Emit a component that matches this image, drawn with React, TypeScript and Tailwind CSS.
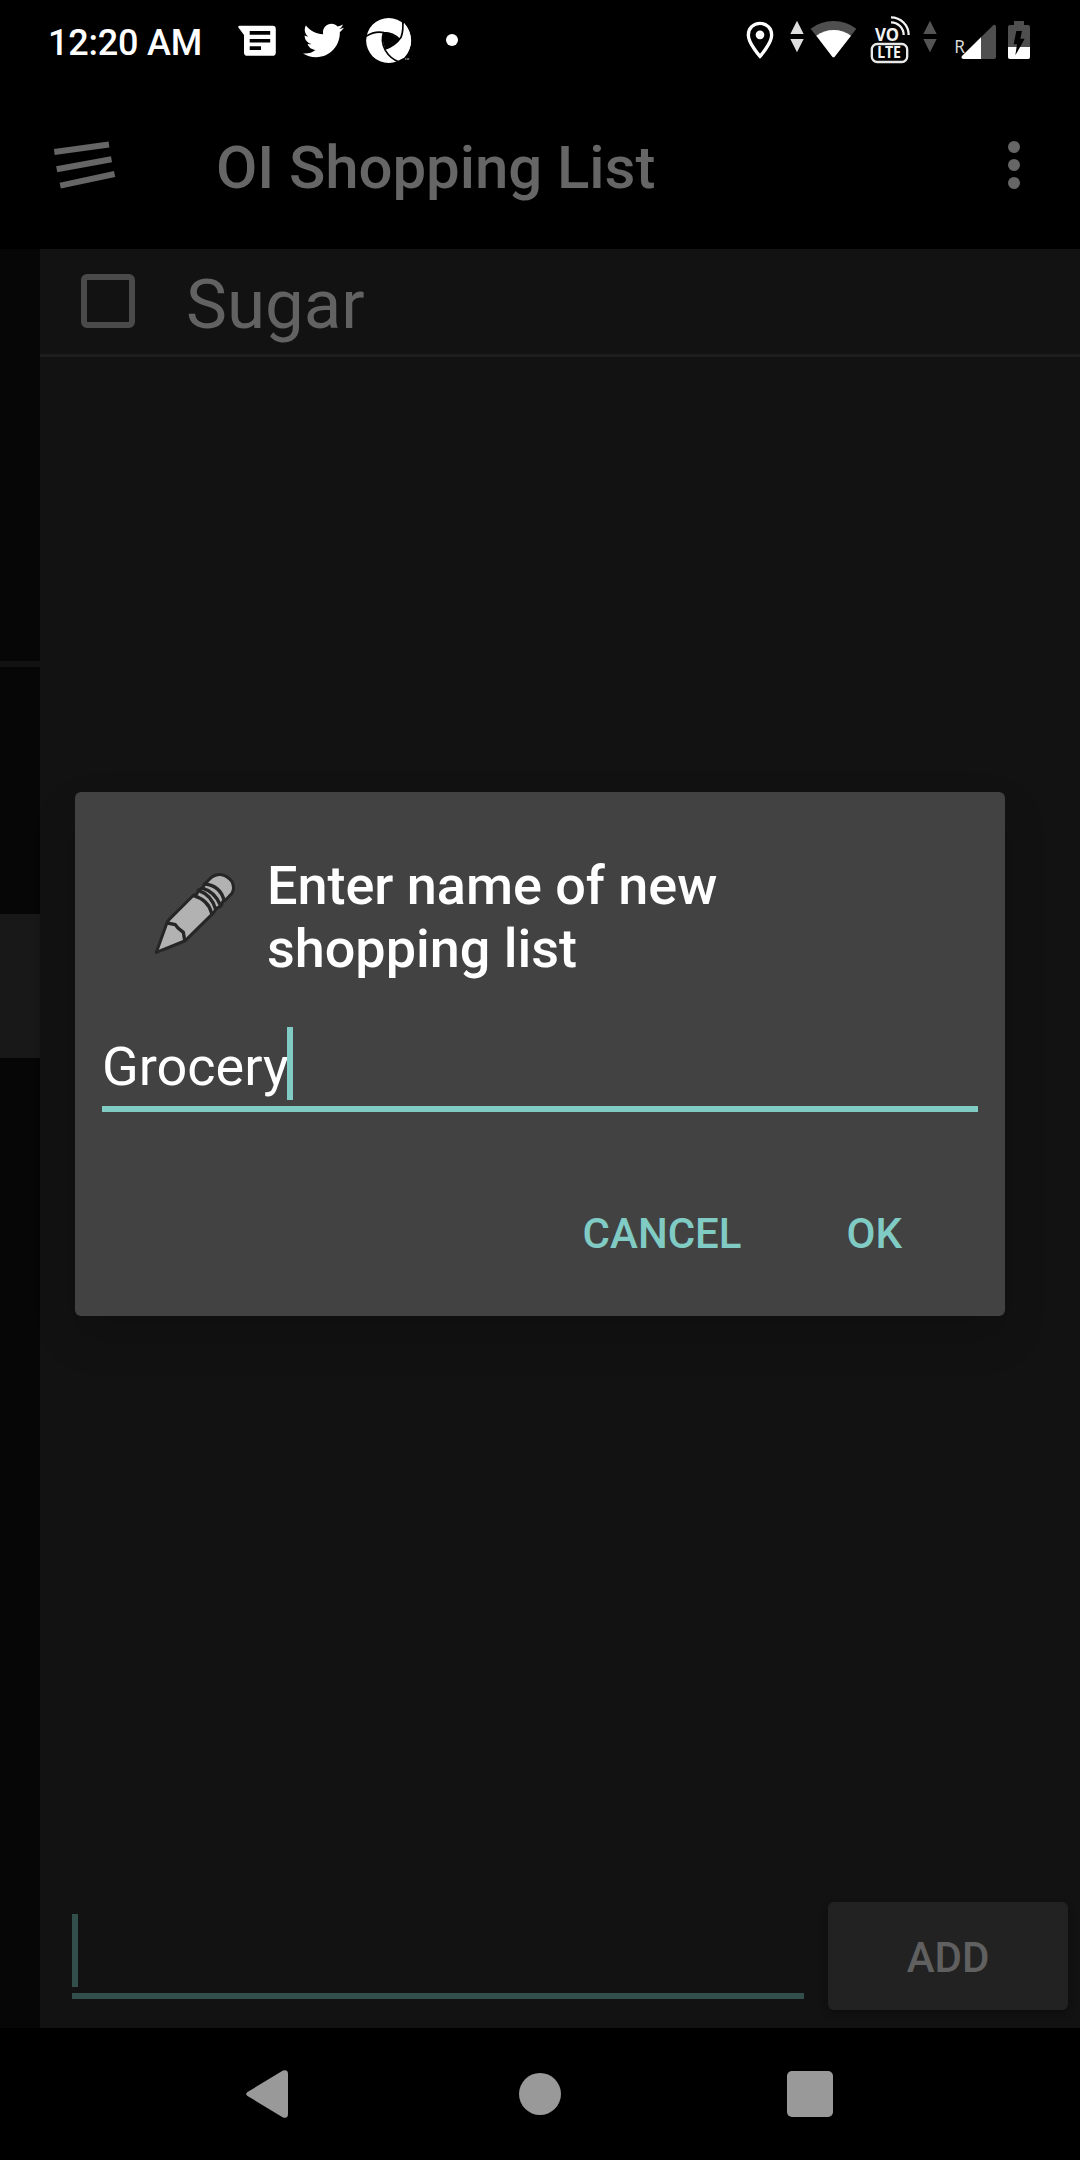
import React from "react";
import { FaTwitter } from "react-icons/fa";

function MessagesIcon() {
  return (
    <svg className="ml-[36px] h-[72px] w-[40px]" viewBox="237 0 40 72">
      <path
        fillRule="evenodd"
        fill="#fff"
        d="M239.5 25.8H272.6a3.2 3.2 0 0 1 3.2 3.2V52.4a3.4 3.4 0 0 1-3.4 3.4H247.4a3.4 3.4 0 0 1-3.4-3.4V35L238.4 27.4Q238 25.8 239.5 25.8ZM249.7 31V34.8H270.2V31ZM249.7 39V42.5H270.2V39ZM249.7 46.3V50H261V46.3Z"
      />
    </svg>
  );
}

function ApertureIcon() {
  return (
    <svg className="ml-[21px] h-[72px] w-[47px]" viewBox="1095 0 141 216">
      <circle cx="1166" cy="121.500" r="67.500" fill="#fff" />
      <path d="M1206 50L1236 90L1222 84Q1216 70 1207 64ZM1186 196L1188 187L1216 176L1236 160V196Z" fill="#000" />
      <path d="M1212 68Q1232 90 1233 121Q1233 152 1212 174L1196 178Q1178 168 1165 151L1158 148Q1186 140 1206 112Q1213 92 1212 68Z" fill="#fff" />
      <path d="M1151 98Q1175 97 1197 118Q1184 139 1157 147Q1144 124 1151 98Z" fill="#000" />
      <g fill="none" stroke="#000" strokeWidth="5">
        <path d="M1098 109Q1125 92 1152 98Q1180 98 1198 118" />
        <path d="M1208 60Q1211 92 1203 112Q1186 137 1156 147" />
        <path d="M1151 97Q1141 122 1156 151Q1171 176 1196 185" />
      </g>
      <path d="M1215 177h5M1223 175v4M1226 175v4" stroke="#ddd" strokeWidth="2.500" />
    </svg>
  );
}

function UpDown({ dim, className }: { dim?: boolean; className: string }) {
  return (
    <svg className={className} viewBox="209 0 42 216">
      <path d="M230 62L250 102H210ZM210 117H250L230 157Z" fill={dim ? "#545454" : "#dedede"} />
    </svg>
  );
}

function StatusBar() {
  return (
    <header className="flex h-[72px] w-full items-start text-white">
      <span className="mt-[22px] ml-[48px] w-[153px] text-[36px] leading-[42px] font-medium tracking-[-0.2px] whitespace-nowrap">
        12:20 AM
      </span>
      <MessagesIcon />
      <FaTwitter className="mt-[20px] ml-[26px] size-[41px]" />
      <ApertureIcon />
      <span className="mt-[34px] ml-[34px] size-[12px] rounded-full bg-white" />

      <svg className="ml-[288px] h-[72px] w-[28px]" viewBox="79 0 84 216">
        <path
          d="M121 70C101 70 86 85 86 105C86 130 121 169 121 169C121 169 156 130 156 105C156 85 141 70 121 70Z"
          fill="none"
          stroke="#fff"
          strokeWidth="10"
        />
        <circle cx="121" cy="104.500" r="13" fill="#fff" />
      </svg>
      <UpDown className="ml-[16px] h-[72px] w-[14px]" />
      <svg className="ml-[6px] h-[72px] w-[48px]" viewBox="270 0 144 216">
        <path d="M272 86Q302 63 340.500 63T409 86L344 170Q340.500 174 337 170Z" fill="#4f4f4f" />
        <path d="M289 107Q312 90 341 90T393 107L344 170Q340.500 174 337 170Z" fill="#fff" />
      </svg>
      <svg className="ml-[12px] h-[72px] w-[42px]" viewBox="450 0 126 216">
        <text x="465" y="123" fontFamily="Noto Sans, sans-serif" fontSize="54" fontWeight="700" textLength="72" lengthAdjust="spacingAndGlyphs" fill="#f2f2f2">
          VO
        </text>
        <rect x="455.500" y="132" width="106" height="54" rx="16" fill="none" stroke="#e8e8e8" strokeWidth="7" />
        <text x="472" y="174" fontFamily="Noto Sans, sans-serif" fontSize="46" fontWeight="700" textLength="71" lengthAdjust="spacingAndGlyphs" fill="#f2f2f2">
          LTE
        </text>
        <g fill="none" stroke="#f2f2f2" strokeWidth="7">
          <path d="M513 52A53 53 0 0 1 566 105" />
          <path d="M513 67A38 38 0 0 1 551 105" />
        </g>
      </svg>
      <UpDown dim className="ml-[11px] h-[72px] w-[14px]" />
      <svg className="ml-[17px] h-[72px] w-[44px]" viewBox="702 0 132 216">
        <path d="M726 168L818 77Q827 71 828 80V171Q828 177 822 177H730Q722 175 726 168Z" fill="#4f4f4f" />
        <path d="M783 112V177H730Q722 175 726 168Z" fill="#fff" />
        <text x="703" y="158" fontFamily="Noto Sans, sans-serif" fontSize="56" textLength="32" lengthAdjust="spacingAndGlyphs" fill="#d8d8d8">
          R
        </text>
      </svg>
      <svg className="ml-[9px] h-[72px] w-[24px]" viewBox="861 0 72 216">
        <path d="M882 63H912V75H924Q930 75 930 81V171Q930 177 924 177H870Q864 177 864 171V81Q864 75 870 75H882Z" fill="#4f4f4f" />
        <path d="M864 141H930V171Q930 177 924 177H870Q864 177 864 171Z" fill="#fff" />
        <path d="M889 93H906L901 116H914L886 166L891 133H881Z" fill="#000" />
      </svg>
    </header>
  );
}

function AppBar() {
  return (
    <div className="flex h-[177px] w-full items-start">
      <svg className="mt-[68px] ml-[51px] h-[54px] w-[69px]" viewBox="51 140 69 54">
        <g stroke="#666" strokeWidth="6">
          <path d="M54.300 152L109 144.500M56.700 169.200L111.500 159.300M60.200 185.600L114.600 174" />
        </g>
      </svg>
      <h1 className="mt-[61px] ml-[96px] text-[60px] leading-[70px] font-medium tracking-[-0.08px] whitespace-nowrap text-[#666]">
        OI Shopping List
      </h1>
      <div className="mt-[69px] mr-[60px] ml-auto flex flex-col gap-[6px]">
        <span className="size-[12px] rounded-full bg-[#666]" />
        <span className="size-[12px] rounded-full bg-[#666]" />
        <span className="size-[12px] rounded-full bg-[#666]" />
      </div>
    </div>
  );
}

function Drawer() {
  return (
    <aside className="flex w-[40px] flex-col bg-[#060606]">
      <div className="mt-[412px] h-[6px] bg-[#121212]" />
      <div className="mt-[247px] h-[144px] bg-[#181818]" />
    </aside>
  );
}

function ListPane() {
  return (
    <main className="flex flex-1 flex-col bg-[#121212]">
      <div className="flex h-[108px] items-start border-b-[3px] border-[#1d1d1d]">
        <span className="mt-[25px] ml-[41px] size-[54px] rounded-[6px] border-[6px] border-[#4a4a4a]" />
        <span className="mt-[16px] ml-[51px] text-[69px] leading-[80px] text-[#626262]">Sugar</span>
      </div>
      <div className="mt-auto flex items-start pb-[18px] pl-[32px]">
        <div className="mt-[12px] flex h-[85px] w-[732px] items-start border-b-[6px] border-[#334f4b]">
          <span className="h-[73px] w-[6px] bg-[#334f4b]" />
        </div>
        <button className="ml-[24px] h-[108px] w-[240px] rounded-[6px] bg-[#222] pt-[2px] text-[42px] leading-[49px] font-medium text-[#606060] shadow-[0_4px_8px_rgba(0,0,0,0.3)]">
          ADD
        </button>
      </div>
    </main>
  );
}

function NavBar() {
  return (
    <nav className="flex h-[132px] w-full items-center">
      <svg className="ml-[246px] h-[48px] w-[42px]" viewBox="0 0 42 48">
        <path d="M1.500 22L37 .6Q42-1 42 4V44Q42 49 37 47.400L1.500 26Q-1.200 24 1.500 22Z" fill="#999" />
      </svg>
      <span className="ml-[231px] size-[42px] rounded-full bg-[#999]" />
      <span className="ml-[226px] size-[46px] rounded-[5px] bg-[#999]" />
    </nav>
  );
}

function PencilIcon() {
  return (
    <svg className="mt-[78px] h-[86px] w-[84px] shrink-0" viewBox="279 270 252 258">
      <g stroke="#262626" strokeWidth="9" strokeLinejoin="round" strokeLinecap="round" fill="#b2b2b2">
        <path d="M289 517L322 425L327 419L398 348L411 341L416 330L428 323L434 312L450 296Q466 282 485 284Q504 288 516 305Q525 325 516 340L499 358L488 365L484 377L470 385L460 399L452 407L382 476L374 483Z" />
        <g fill="none" strokeWidth="10">
          <path d="M322 429L346 434L354 444L370 457L374 481" />
          <path d="M401 347Q445 360 455 400" />
          <path d="M415 331Q455 345 467 388" />
          <path d="M429 325Q464 335 481 375" />
          <path d="M435 312Q480 317 492 360" />
        </g>
      </g>
    </svg>
  );
}

function NewListDialog() {
  return (
    <div className="absolute top-[792px] left-[75px] flex h-[524px] w-[930px] flex-col rounded-[6px] bg-[#424242] shadow-[0_20px_44px_rgba(0,0,0,0.16)]">
      <div className="flex h-[235px] items-start pl-[78px]">
        <PencilIcon />
        <h2 className="mt-[62px] ml-[30px] w-[560px] text-[54px] leading-[63px] font-medium tracking-[-0.03px] text-white">
          Enter name of new shopping list
        </h2>
      </div>
      <div className="mx-[27px] flex h-[85px] items-start border-b-[6px] border-[#80cbc4]">
        <span className="mt-[8px] w-[185px] text-[54px] leading-[63px] whitespace-nowrap text-white">Grocery</span>
        <span className="h-[73px] w-[6px] bg-[#80cbc4]" />
      </div>
      <div className="mt-[97px] flex justify-end gap-[105px] pr-[103px] text-[42px] leading-[49px] font-medium text-[#80cbc4]">
        <button>CANCEL</button>
        <button>OK</button>
      </div>
    </div>
  );
}

export default function App() {
  return (
    <div className="relative flex h-[2160px] w-[1080px] flex-col overflow-hidden bg-black font-[Roboto,sans-serif]">
      <StatusBar />
      <AppBar />
      <div className="flex flex-1">
        <Drawer />
        <ListPane />
      </div>
      <NavBar />
      <NewListDialog />
    </div>
  );
}
